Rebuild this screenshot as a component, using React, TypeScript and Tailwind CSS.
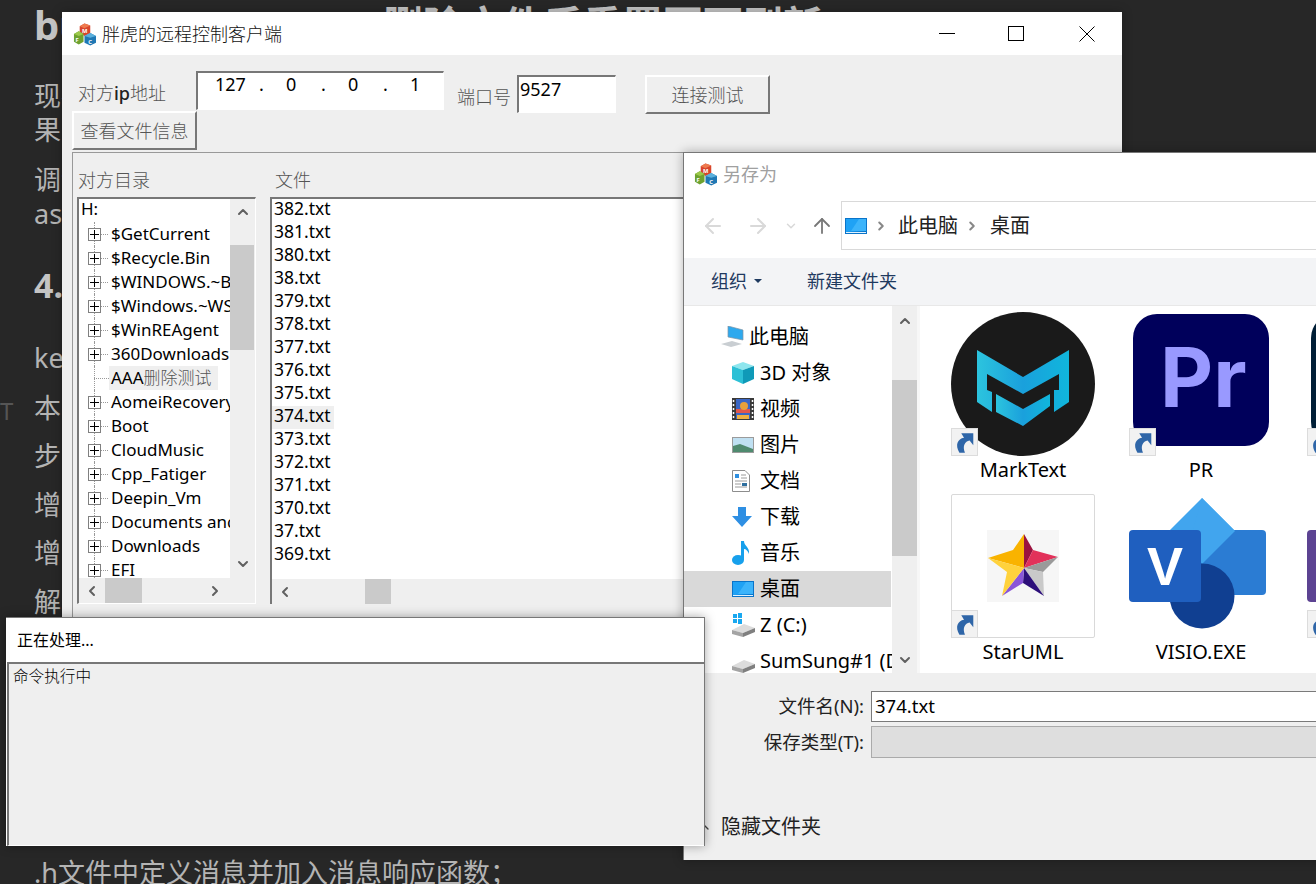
import { ArrowLeft, ArrowRight, ArrowUp, ChevronDown, ChevronLeft, ChevronRight, ChevronUp } from 'lucide-react';
import type { ReactNode } from 'react';

// MFC app icon: three little cubes
function CubesIcon({ className }: { className: string }) {
  return (
    <svg viewBox="0 0 24 24" className={className}>
      <polygon points="7,4 12,1 18,3 18,11 12,14 7,11" fill="#d8452c" />
      <polygon points="7,4 12,1 18,3 12,6" fill="#ee7a4e" />
      <text x="9.5" y="10.5" fontSize="6" fill="#fff" fontWeight="700">M</text>
      <polygon points="1,12 6,9 11,12 11,20 6,23 1,20" fill="#6ea22f" />
      <polygon points="1,12 6,9 11,12 6,14" fill="#9cc94a" />
      <text x="2.5" y="20" fontSize="6" fill="#fff" fontWeight="700">F</text>
      <polygon points="12,14 18,11 24,14 24,21 18,24 12,21" fill="#1f78b4" />
      <polygon points="12,14 18,11 24,14 18,16" fill="#5bb0dc" />
      <text x="16" y="22" fontSize="6" fill="#fff" fontWeight="700">C</text>
    </svg>
  );
}

function DesktopIcon({ className }: { className: string }) {
  return (
    <svg viewBox="0 0 22 16" className={className}>
      <rect width="22" height="16" fill="#0a74c9" />
      <polygon points="1,1 21,1 21,13 1,14" fill="#1fa2f5" />
      <polygon points="14,1 21,1 21,13 6,13" fill="#3cb4fb" />
      <rect x="1" y="14" width="20" height="1" fill="#dff2ff" />
    </svg>
  );
}

function DriveIcon({ windows }: { windows?: boolean }) {
  return (
    <svg viewBox="0 0 24 24" className="w-[24px] h-[24px]">
      {windows && (
        <g fill="#19a8f0">
          <rect x="1" y="1" width="4" height="4" />
          <rect x="6" y="0" width="4" height="5" />
          <rect x="1" y="6" width="4" height="4" />
          <rect x="6" y="6" width="4" height="5" />
        </g>
      )}
      <polygon points="0,17 12,11 23,15 11,20" fill="#dcdcdc" />
      <polygon points="0,17 11,20 11,24 0,21" fill="#a4a4a4" />
      <polygon points="11,20 23,15 23,19 11,24" fill="#7f7f7f" />
    </svg>
  );
}

function NavIcon({ kind }: { kind: string }) {
  if (kind === 'pc') {
    return (
      <svg viewBox="0 0 24 22" className="w-[24px] h-[22px]">
        <polygon points="8,0 23,4 23,14 8,11" fill="#2ea9ee" stroke="#7f93a3" strokeWidth="0.7" />
        <polygon points="1,18 12,15 22,18 11,21" fill="#c9ced2" />
      </svg>
    );
  }
  if (kind === '3d') {
    return (
      <svg viewBox="0 0 22 22" className="w-[22px] h-[22px]">
        <polygon points="11,0 22,4 11,8 0,4" fill="#8ee6ee" />
        <polygon points="0,4 11,8 11,22 0,17" fill="#2cc0d6" />
        <polygon points="22,4 11,8 11,22 22,17" fill="#0f9ab8" />
      </svg>
    );
  }
  if (kind === 'video') {
    return (
      <svg viewBox="0 0 22 22" className="w-[22px] h-[22px]">
        <rect width="22" height="22" fill="#3a3a3a" />
        <path d="M1.5 2v18M20.5 2v18" stroke="#fff" strokeWidth="1.5" strokeDasharray="2 2" />
        <rect x="4" y="1" width="14" height="20" fill="#3a66c4" />
        <rect x="4" y="11" width="14" height="4" fill="#e2574c" />
        <circle cx="12" cy="8" r="4" fill="#e8a13b" />
        <rect x="5" y="17" width="12" height="4" fill="#f0b042" />
      </svg>
    );
  }
  if (kind === 'picture') {
    return (
      <svg viewBox="0 0 22 16" className="w-[22px] h-[16px]">
        <rect width="22" height="16" fill="#9b9b9b" />
        <rect x="1" y="1" width="20" height="14" fill="#bfe0f2" />
        <polygon points="1,9 8,7 21,12 21,15 1,15" fill="#4f8a6f" />
      </svg>
    );
  }
  if (kind === 'doc') {
    return (
      <svg viewBox="0 0 18 22" className="w-[18px] h-[22px]">
        <polygon points="0.5,0.5 13,0.5 17.5,5 17.5,21.5 0.5,21.5" fill="#fff" stroke="#8d8d8d" />
        <rect x="3" y="4" width="4" height="4" fill="#2f8fe0" />
        <path d="M9 5h5M9 8h6M3 11h12M3 14h6M3 17h12" stroke="#9a9a9a" />
        <rect x="10" y="13" width="5" height="3" fill="#2f6f9f" />
      </svg>
    );
  }
  if (kind === 'download') {
    return (
      <svg viewBox="0 0 20 20" className="w-[20px] h-[20px]">
        <polygon points="6,0 14,0 14,9 20,9 10,20 0,9 6,9" fill="#2e8fe3" />
      </svg>
    );
  }
  if (kind === 'music') {
    return (
      <svg viewBox="0 0 18 24" className="w-[18px] h-[24px]">
        <ellipse cx="6" cy="19" rx="6" ry="5" fill="#17a0ec" />
        <path d="M9 0h3c0 5 6 6 5 13-1-3-3-5-5-5v11H9z" fill="#17a0ec" />
      </svg>
    );
  }
  if (kind === 'desktop') return <DesktopIcon className="w-[22px] h-[16px]" />;
  return <DriveIcon windows={kind === 'win'} />;
}

function ShortcutBadge() {
  return (
    <div className="absolute left-0 bottom-0 w-[27px] h-[28px] bg-[#f2f2f2] border border-[#dcdcdc]">
      <svg viewBox="0 0 27 27" className="w-full h-full">
        <path d="M8 25C3 17 6 10 13 9L10 4H23V17L19 12C14 13 11 18 14 25Z" fill="#2f66a8" />
      </svg>
    </div>
  );
}

function MarkTextIcon() {
  return (
    <svg viewBox="0 0 144 144" className="w-full h-full">
      <defs>
        <linearGradient id="mt" x1="0" y1="0" x2="1" y2="0">
          <stop offset="0" stopColor="#2cc4de" />
          <stop offset="0.5" stopColor="#1aa0dc" />
          <stop offset="1" stopColor="#10b6dc" />
        </linearGradient>
      </defs>
      <circle cx="72" cy="72" r="72" fill="#1a1a1a" />
      <polygon
        points="26,38 72,65 118,38 118,90 103,100 103,78 108,78 108,62 72,82 36,62 36,78 41,80 41,100 26,90"
        fill="url(#mt)"
      />
      <polygon points="45,82 72,97 99,82 99,94 72,114 45,100" fill="url(#mt)" />
    </svg>
  );
}

function PrIcon() {
  return (
    <svg viewBox="0 0 144 144" className="w-full h-full">
      <rect x="4" y="2" width="136" height="132" rx="24" fill="#00005b" />
      <text x="31" y="95" fontSize="82" fontWeight="700" fill="#9999ff" fontFamily="Inter, sans-serif">Pr</text>
    </svg>
  );
}

function StarUmlIcon() {
  return (
    <div className="w-full h-full border border-[#d9d9d9] rounded-[2px] flex items-center justify-center">
      <svg viewBox="0 0 72 72" className="w-[72px] h-[72px] bg-[#f6f6f6]">
        <polygon points="37,4 37,38 1,28 26,20" fill="#f9b300" />
        <polygon points="37,4 46,20 37,38" fill="#9b1240" />
        <polygon points="46,20 71,27 37,38" fill="#e2315a" />
        <polygon points="71,27 56,42 37,38" fill="#9a9a9a" />
        <polygon points="56,42 57,66 37,38" fill="#c9c9c9" />
        <polygon points="37,38 57,66 36,53" fill="#2d0f7a" />
        <polygon points="37,38 36,53 15,66" fill="#8a55d8" />
        <polygon points="1,28 37,38 15,66 20,42" fill="#ffd23c" />
      </svg>
    </div>
  );
}

function VisioIcon() {
  return (
    <svg viewBox="0 0 144 144" className="w-full h-full">
      <polygon points="73,4 106,37 73,70 40,37" fill="#41a5ee" />
      <path d="M72 36H133a4 4 0 0 1 4 4V97a4 4 0 0 1-4 4H72Z" fill="#2b7cd3" />
      <polygon points="73,4 106,37 73,70 60,50" fill="#41a5ee" />
      <circle cx="73" cy="102" r="32.5" fill="#103f91" />
      <rect x="0" y="36" width="72" height="72" rx="4" fill="#1f5fbf" />
      <text x="36" y="91" textAnchor="middle" fontSize="54" fontWeight="700" fill="#fff" fontFamily="'Liberation Sans', sans-serif">V</text>
    </svg>
  );
}

function DesktopItem({ label, badge = true, children }: { label?: string; badge?: boolean; children: ReactNode }) {
  return (
    <div className="w-[178px] h-[182px] shrink-0">
      <div className="relative w-[144px] h-[144px] mx-auto">
        {children}
        {badge && <ShortcutBadge />}
      </div>
      <div className="h-[28px] flex items-center justify-center text-[20px] leading-none text-black">{label}</div>
    </div>
  );
}

function RaisedButton({ className, children }: { className: string; children: ReactNode }) {
  return (
    <div className={`flex items-center justify-center bg-[#efefef] border-t-2 border-l-2 border-white border-r-2 border-b-2 border-r-[#777] border-b-[#777] text-[18px] leading-none text-[#555] font-light ${className}`}>
      {children}
    </div>
  );
}

function TreeRow({ label, leaf }: { label: string; leaf?: boolean }) {
  return (
    <div className="relative h-[24px] flex items-center pl-[9px] whitespace-nowrap">
      <div className="absolute inset-y-0 left-[15px] border-l border-dotted border-[#999]" />
      {leaf ? (
        <>
          <div className="relative w-[15px] ml-[6px] shrink-0 border-t border-dotted border-[#999]" />
          <span className="w-[109px] h-[24px] px-[2px] flex items-center bg-[#efefef] text-black"><span className="-mt-[2px]">AAA</span><span className="-mt-[2px] text-[#555] font-light">{label}</span></span>
        </>
      ) : (
        <>
          <div className="relative w-[13px] h-[13px] shrink-0 bg-white border border-[#808080] flex items-center justify-center">
            <div className="absolute w-[9px] h-px bg-black" />
            <div className="absolute w-px h-[9px] bg-black" />
          </div>
          <div className="w-[7px] shrink-0 border-t border-dotted border-[#999]" />
          <span className="ml-[3px] -mt-[2px] text-black">{label}</span>
        </>
      )}
    </div>
  );
}

function App() {
  const tree = ['$GetCurrent', '$Recycle.Bin', '$WINDOWS.~BT', '$Windows.~WS', '$WinREAgent', '360Downloads'];
  const tree2 = ['AomeiRecovery', 'Boot', 'CloudMusic', 'Cpp_Fatiger', 'Deepin_Vm', 'Documents and', 'Downloads', 'EFI'];
  const files = ['382', '381', '380', '38', '379', '378', '377', '376', '375', '374', '373', '372', '371', '370', '37', '369'];
  const nav = [
    { kind: '3d', label: '3D 对象' },
    { kind: 'video', label: '视频' },
    { kind: 'picture', label: '图片' },
    { kind: 'doc', label: '文档' },
    { kind: 'download', label: '下载' },
    { kind: 'music', label: '音乐' },
    { kind: 'desktop', label: '桌面' },
    { kind: 'win', label: 'Z (C:)' },
    { kind: 'drive', label: 'SumSung#1 (D:)' },
  ];

  return (
    <div className="relative w-[1316px] h-[884px] overflow-hidden bg-[#272727] font-['Noto_Sans','Noto_Sans_CJK_SC',sans-serif]">
      {/* article behind the windows */}
      <div className="flex flex-col pl-[34px] text-[27px] leading-[34px] text-[#b4b4b4] whitespace-nowrap">
        <div className="h-[79px] text-[40px] leading-[50px] font-bold text-[#c4c4c4]">bug_20200913_09 删除文件后重置页面刷新</div>
        <p>现在的</p>
        <p>果</p>
        <p className="mt-[16px]">调试</p>
        <p>as</p>
        <p className="mt-[37px] text-[34px] font-bold text-[#c4c4c4]">4.</p>
        <p className="mt-[39px]">ke</p>
        <p className="mt-[16px]">本</p>
        <p className="mt-[14px]">步</p>
        <p className="mt-[15px]">增</p>
        <p className="mt-[14px]">增</p>
        <p className="mt-[15px]">解</p>
        <p className="mt-[237px]">.h文件中定义消息并加入消息响应函数；</p>
      </div>
      <div className="absolute left-0 top-[398px] text-[24px] leading-[26px] text-[#555]">T</div>

      {/* main client window */}
      <div className="absolute left-[62px] top-[12px] w-[1060px] h-[606px] flex flex-col bg-[#efefef] shadow-[0_0_10px_rgba(0,0,0,0.25)]">
        <div className="h-[43px] shrink-0 flex items-center bg-white pl-[11px]">
          <CubesIcon className="w-[23px] h-[24px]" />
          <span className="ml-[6px] text-[18px] leading-none text-[#111] font-light">胖虎的远程控制客户端</span>
          <div className="ml-auto flex items-center pr-[27px]">
            <div className="w-[16px] h-px bg-black" />
            <div className="ml-[53px] w-[16px] h-[15px] border border-black" />
            <svg viewBox="0 0 16 16" className="ml-[55px] w-[16px] h-[16px]">
              <path d="M0.5 0.5L15.5 15.5M15.5 0.5L0.5 15.5" stroke="#000" />
            </svg>
          </div>
        </div>

        <div className="mt-[16px] h-[40px] shrink-0 flex items-start pl-[16px]">
          <div className="w-[118px] pt-[10px] text-[18px] leading-[24px] text-[#555] font-light">对方<span className="text-[#222] font-medium">ip</span>地址</div>
          <div className="w-[248px] h-[39px] flex bg-white border-t-2 border-l-2 border-t-[#777] border-l-[#777] border-r border-b border-r-white border-b-white text-[18px] leading-[22px] text-black">
            <span className="w-[61px] pl-[17px]">127</span>
            <span className="w-[27px]">.</span>
            <span className="w-[35px]">0</span>
            <span className="w-[27px]">.</span>
            <span className="w-[35px]">0</span>
            <span className="w-[27px]">.</span>
            <span>1</span>
          </div>
          <div className="ml-[13px] pt-[14px] w-[60px] text-[18px] leading-[24px] text-[#555] font-light">端口号</div>
          <div className="mt-[4px] w-[99px] h-[38px] bg-white border-t-2 border-l-2 border-t-[#777] border-l-[#777] border-r border-b border-r-white border-b-white pl-[1px] text-[18px] leading-[24px] text-black">9527</div>
          <RaisedButton className="mt-[4px] ml-[29px] w-[125px] h-[39px]">连接测试</RaisedButton>
        </div>

        <RaisedButton className="ml-[10px] w-[125px] h-[39px] shrink-0">查看文件信息</RaisedButton>

        <div className="mt-[2px] ml-[10px] flex-1 flex flex-col border-t border-l border-[#999] pl-[4px]">
          <div className="h-[44px] flex items-end pb-[5px] text-[18px] leading-[24px] text-[#555] font-light">
            <span className="w-[198px] pl-[1px]">对方目录</span>
            <span>文件</span>
          </div>
          <div className="h-[407px] flex gap-[14px] text-[17px] leading-none">
            {/* directory tree */}
            <div className="w-[179px] flex flex-col border-t-2 border-l-2 border-t-[#777] border-l-[#777] border-r border-b border-r-white border-b-white">
              <div className="flex-1 flex min-h-0">
                <div className="flex-1 min-w-0 overflow-hidden bg-white">
                  <div className="h-[23px] pl-[2px] pb-[4px] flex items-center text-black">H:</div>
                  {tree.map((t) => <TreeRow key={t} label={t} />)}
                  <TreeRow label="删除测试" leaf />
                  {tree2.map((t) => <TreeRow key={t} label={t} />)}
                </div>
                <div className="w-[25px] shrink-0 flex flex-col items-center bg-[#efefef] text-[#606060]">
                  <div className="h-[26px] flex items-center"><ChevronUp size={16} strokeWidth={3} /></div>
                  <div className="self-start w-[24px] h-[105px] mt-[20px] bg-[#cacaca]" />
                  <div className="mt-auto h-[24px] pb-[4px] flex items-center"><ChevronDown size={16} strokeWidth={3} /></div>
                </div>
              </div>
              <div className="h-[25px] shrink-0 flex items-center bg-[#efefef] text-[#606060]">
                <div className="w-[26px] pl-[5px]"><ChevronLeft size={16} strokeWidth={3} /></div>
                <div className="w-[37px] h-full bg-[#cacaca]" />
                <ChevronRight size={16} strokeWidth={3} className="ml-[65px]" />
              </div>
            </div>
            {/* file list */}
            <div className="flex-1 flex flex-col border-t-2 border-l-2 border-t-[#777] border-l-[#777]">
              <div className="flex-1 bg-white min-h-0 overflow-hidden text-[17.5px]">
                {files.map((f) => (
                  <div key={f} className="h-[23px] flex items-center">
                    <span className={f === '374' ? 'h-full flex items-center pl-[2px] pr-[3px] pb-[4px] bg-[#efefef] text-black' : 'pl-[2px] pb-[4px] text-black'}>{f}.txt</span>
                  </div>
                ))}
              </div>
              <div className="h-[25px] shrink-0 flex items-center bg-[#efefef] text-[#606060]">
                <div className="w-[93px] pl-[5px]"><ChevronLeft size={16} strokeWidth={3} /></div>
                <div className="w-[26px] h-full bg-[#cacaca]" />
              </div>
            </div>
          </div>
        </div>
      </div>

      {/* save as dialog */}
      <div className="absolute left-[683px] top-[152px] w-[640px] h-[708px] flex flex-col bg-white border-l border-t border-[#777] shadow-[0_0_10px_rgba(0,0,0,0.3)]">
        <div className="h-[42px] shrink-0 flex items-center pl-[10px]">
          <CubesIcon className="w-[23px] h-[24px]" />
          <span className="ml-[6px] text-[18px] leading-none text-[#a0a0a0]">另存为</span>
        </div>
        <div className="h-[63px] shrink-0 flex items-start pt-[6px]">
          <div className="w-[157px] h-[49px] flex items-center text-[#d9d9d9] pl-[17px]">
            <ArrowLeft size={24} strokeWidth={2} />
            <ArrowRight size={24} strokeWidth={2} className="ml-[21px]" />
            <ChevronDown size={14} strokeWidth={2.5} className="ml-[14px]" />
            <ArrowUp size={24} strokeWidth={1.8} className="ml-[12px] text-[#777]" />
          </div>
          <div className="flex-1 h-[49px] flex items-center border border-[#d9d9d9] pl-[3px] text-[20px] leading-none text-[#222]">
            <DesktopIcon className="w-[22px] h-[16px]" />
            <ChevronRight size={14} strokeWidth={3.5} className="ml-[7px] text-[#888]" />
            <span className="ml-[10px] w-[60px] whitespace-nowrap">此电脑</span>
            <ChevronRight size={14} strokeWidth={3.5} className="ml-[7px] text-[#888]" />
            <span className="ml-[11px]">桌面</span>
          </div>
        </div>
        <div className="h-[48px] shrink-0 flex items-center bg-[#f3f4f6] border-b border-[#e8e8e8] pl-[27px] pb-[2px] text-[18px] leading-none text-[#1f3a5f]">
          <span>组织</span>
          <div className="ml-[7px] mt-[1px] w-0 h-0 border-x-[4px] border-x-transparent border-t-[4px] border-t-[#1f3a5f]" />
          <span className="ml-[45px]">新建文件夹</span>
        </div>

        <div className="h-[367px] shrink-0 flex overflow-hidden">
          <div className="w-[208px] shrink-0 pt-[13px] overflow-hidden text-[20px] leading-none text-black whitespace-nowrap">
            <div className="h-[36px] flex items-center pl-[36px]">
              <NavIcon kind="pc" />
              <span className="ml-[5px]">此电脑</span>
            </div>
            {nav.map((n) => (
              <div key={n.label} className={n.kind === 'desktop' ? 'h-[36px] mr-px flex items-center bg-[#d9d9d9]' : 'h-[36px] flex items-center'}>
                <div className="w-[28px] ml-[48px] shrink-0 flex items-center"><NavIcon kind={n.kind} /></div>
                <span>{n.label}</span>
              </div>
            ))}
          </div>
          <div className="w-[25px] shrink-0 flex flex-col items-center bg-[#efefef] text-[#606060]">
            <div className="h-[29px] flex items-center"><ChevronUp size={16} strokeWidth={3} /></div>
            <div className="mt-[45px] w-full h-[176px] bg-[#cacaca]" />
            <div className="mt-auto h-[26px] flex items-center"><ChevronDown size={16} strokeWidth={3} /></div>
          </div>
          <div className="w-[3px] shrink-0 bg-[#f7f7f7]" />
          <div className="flex-1 min-w-0 overflow-hidden pl-[14px] pt-[6px]">
            <div className="flex w-[600px]">
              <DesktopItem label="MarkText"><MarkTextIcon /></DesktopItem>
              <DesktopItem label="PR"><PrIcon /></DesktopItem>
              <DesktopItem>
                <div className="h-full pl-[4px] pt-[2px]">
                  <div className="w-[136px] h-[132px] rounded-[24px] bg-[#001e36]" />
                </div>
              </DesktopItem>
            </div>
            <div className="flex w-[600px]">
              <DesktopItem label="StarUML"><StarUmlIcon /></DesktopItem>
              <DesktopItem label="VISIO.EXE" badge={false}><VisioIcon /></DesktopItem>
              <DesktopItem>
                <div className="h-full pt-[36px]">
                  <div className="w-[136px] h-[72px] rounded-[4px] bg-[#5c4392]" />
                </div>
              </DesktopItem>
            </div>
          </div>
        </div>

        <div className="flex-1 bg-[#efefef] pt-[18px] text-[18.5px] leading-none text-[#222]">
          <div className="flex items-center h-[31px]">
            <span className="w-[180px] text-right">文件名(N):</span>
            <div className="ml-[7px] flex-1 h-full flex items-center bg-white border border-[#7a7a7a] pl-[3px] text-black">374.txt</div>
          </div>
          <div className="mt-[4px] flex items-center h-[32px]">
            <span className="w-[180px] text-right">保存类型(T):</span>
            <div className="ml-[7px] flex-1 h-full bg-[#dedede] border border-[#aaaaaa]" />
          </div>
          <div className="mt-[55px] h-[28px] flex items-center pl-[12px] text-[20px]">
            <ChevronUp size={16} strokeWidth={2} className="text-[#444]" />
            <span className="ml-[9px]">隐藏文件夹</span>
          </div>
        </div>
      </div>

      {/* progress dialog */}
      <div className="absolute left-[6px] top-[617px] w-[699px] h-[229px] flex flex-col bg-white border-t border-r border-[#777] shadow-[0_0_10px_rgba(0,0,0,0.35)]">
        <div className="h-[44px] shrink-0 flex items-center pl-[11px] text-[16px] leading-none text-black">正在处理...</div>
        <div className="flex-1 ml-px bg-[#efefef] border-t-2 border-l-2 border-t-[#777] border-l-[#777] border-b border-b-white pl-[4px] pt-[2px] text-[15.6px] leading-[20px] text-black font-light">命令执行中</div>
      </div>
    </div>
  );
}

export default App;
